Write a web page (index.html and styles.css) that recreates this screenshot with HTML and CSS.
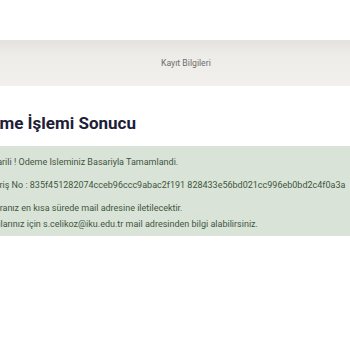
FILE: index.html
```html
<!DOCTYPE html>
<html lang="tr">
<head>
<meta charset="utf-8">
<title>Ödeme İşlemi Sonucu</title>
<link rel="stylesheet" href="styles.css">
</head>
<body>
<div class="top-space"></div>
<nav class="tabs">
  <span class="tab">Kayıt Bilgileri</span>
</nav>
<main class="content">
  <h1 class="title">Ödeme İşlemi Sonucu</h1>
  <div class="alert">
    <p class="line">Basarili ! Odeme Isleminiz Basariyla Tamamlandi.</p>
    <p class="line">Sipariş No : 835f451282074cceb96ccc9abac2f191 828433e56bd021cc996eb0bd2c4f0a3a</p>
    <p class="line">Faturanız en kısa sürede mail adresine iletilecektir.<br>Sorularınız için s.celikoz@iku.edu.tr mail adresinden bilgi alabilirsiniz.</p>
  </div>
</main>
</body>
</html>
```
FILE: styles.css
```css
html, body {
  margin: 0;
  padding: 0;
  background: #ffffff;
  overflow: hidden;
  font-family: Roboto, "Liberation Sans", sans-serif;
}
.top-space {
  height: 40px;
}
.tabs {
  height: 46px;
  display: flex;
  align-items: center;
  padding-left: 161px;
  background: linear-gradient(#e4e2de, #eeece9 30%, #f2f0ed);
}
.tab {
  font-size: 8.7px;
  color: #6d6d6d;
}
.content {
  margin-left: -31px;
  padding-top: 27px;
}
.title {
  margin: 0 0 12px 0;
  font-size: 17px;
  line-height: 21px;
  font-weight: 700;
  color: #1c2036;
  white-space: nowrap;
}
.alert {
  background: #d9e3d7;
  padding: 8px 0 4px 13px;
  box-shadow: 0 2px 2px rgba(220, 228, 218, 0.6);
  margin-right: -40px;
}
.line {
  margin: 0 0 7px 0;
  font-size: 9px;
  line-height: 16px;
  color: #3f5640;
  white-space: nowrap;
}
.line:last-child {
  margin-bottom: 0;
}
```
